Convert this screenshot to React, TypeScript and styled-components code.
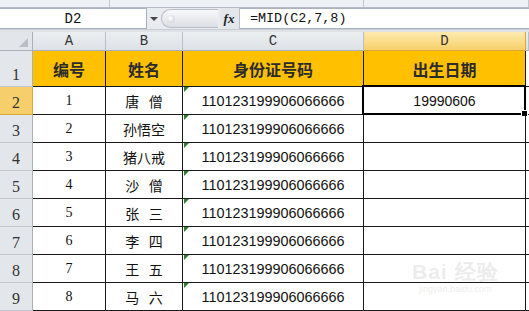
import React from "react";
import styled, { createGlobalStyle } from "styled-components";

const GlobalStyle = createGlobalStyle`
  html, body {
    margin: 0;
    padding: 0;
    background: #ffffff;
    overflow: hidden;
  }
`;

const Page = styled.div`
  width: 529px;
  height: 311px;
  display: flex;
  flex-direction: column;
  background: #dfe3e8;
  font-family: "Liberation Sans", Arial, sans-serif;
  position: relative;
  overflow: hidden;
`;

const RibbonEdge = styled.div`
  height: 7px;
  display: grid;
  grid-template-columns: 110px 254px 1fr;
  background: #eef1f5;
  border-bottom: 1px solid #b6bcc6;
  & > div {
    border-right: 1px solid #c3c8d0;
  }
`;

const FormulaBar = styled.div`
  height: 21px;
  display: flex;
  align-items: stretch;
  background: #e8ebef;
  border-bottom: 1px solid #c8ccd3;
  margin-bottom: 2px;
`;

const NameBox = styled.div`
  width: 146px;
  background: #fff;
  border: 1px solid #aab2bd;
  border-left: none;
  display: flex;
  align-items: center;
  justify-content: center;
  font-family: "Liberation Mono", "DejaVu Sans Mono", monospace;
  font-size: 14px;
  color: #111;
`;

const DropArrow = styled.div`
  width: 14px;
  display: flex;
  align-items: center;
  justify-content: center;
  &::before {
    content: "";
    border-left: 4px solid transparent;
    border-right: 4px solid transparent;
    border-top: 4px solid #444;
  }
`;

const Grip = styled.div`
  width: 56px;
  margin: 1px 2px 1px 0;
  position: relative;
  border-radius: 10px 0 0 10px;
  background: linear-gradient(#f7f8fa, #dcdfe4);
  border: 1px solid #b9bec6;
  border-right: none;
  &::after {
    content: "";
    position: absolute;
    left: 5px;
    top: 5px;
    width: 8px;
    height: 8px;
    border-radius: 50%;
    background: radial-gradient(circle at 40% 40%, #fff, #c4c8ce);
  }
`;

const FxButton = styled.div`
  width: 18px;
  display: flex;
  align-items: center;
  justify-content: center;
  font-family: "Liberation Serif", serif;
  font-style: italic;
  font-weight: bold;
  font-size: 13px;
  color: #222;
  background: #e3e6ea;
  border-right: 1px solid #b9bec6;
  padding-right: 1px;
`;

const FormulaInput = styled.div`
  flex: 1;
  background: #fff;
  border-top: 1px solid #aab2bd;
  border-bottom: 1px solid #aab2bd;
  display: flex;
  align-items: center;
  padding-left: 10px;
  font-family: "Liberation Mono", "DejaVu Sans Mono", monospace;
  font-size: 13.4px;
  color: #111;
`;

const Sheet = styled.div`
  display: grid;
  grid-template-columns: 33px 73px 77px 181px 162px 1fr;
  grid-template-rows: 19px 36px repeat(8, 28px);
  background: #fff;
`;

const Corner = styled.div`
  background: #e2e5ea;
  border-right: 1px solid #a9b0ba;
  border-bottom: 1px solid #a9b0ba;
  position: relative;
  &::after {
    content: "";
    position: absolute;
    right: 4px;
    bottom: 3px;
    border-left: 9px solid transparent;
    border-bottom: 9px solid #b9bdc4;
  }
`;

const ColHead = styled.div<{ $active?: boolean }>`
  display: flex;
  align-items: center;
  justify-content: center;
  font-family: "Liberation Mono", "DejaVu Sans Mono", monospace;
  font-size: 14px;
  color: #333;
  background: ${(p) =>
    p.$active
      ? "linear-gradient(#fdeab0, #f7cf6a)"
      : "linear-gradient(#eceff2, #dde1e6)"};
  border-right: 1px solid ${(p) => (p.$active ? "#d9a93c" : "#b8bfc9")};
  border-bottom: 1px solid ${(p) => (p.$active ? "#d9a93c" : "#a9b0ba")};
`;

const RowHead = styled.div<{ $active?: boolean }>`
  display: flex;
  align-items: flex-end;
  justify-content: center;
  padding-bottom: 2px;
  font-family: "Liberation Serif", serif;
  font-size: 16px;
  color: #333;
  background: ${(p) => (p.$active ? "#f6cf6c" : "#e3e6ea")};
  border-right: 1px solid ${(p) => (p.$active ? "#d9a93c" : "#a9b0ba")};
  border-bottom: 1px solid ${(p) => (p.$active ? "#d9a93c" : "#c2c7cf")};
`;

const HeadCell = styled.div`
  display: flex;
  align-items: center;
  justify-content: center;
  background: #ffc000;
  border-right: 1px solid #1a1a1a;
  border-bottom: 1px solid #1a1a1a;
  font-family: "Noto Sans CJK SC", sans-serif;
  font-weight: bold;
  font-size: 16px;
  color: #2b2b2b;
`;

const Cell = styled.div<{ $kind?: "id" | "num" | "name" | "date" }>`
  position: relative;
  display: flex;
  align-items: center;
  justify-content: center;
  border-right: 1px solid #1a1a1a;
  border-bottom: 1px solid #1a1a1a;
  color: #111;
  font-family: ${(p) =>
    p.$kind === "name"
      ? '"Noto Sans CJK SC", sans-serif'
      : p.$kind === "num"
      ? '"Liberation Serif", serif'
      : '"Liberation Sans", Arial, sans-serif'};
  font-size: ${(p) => (p.$kind === "id" ? "14.4px" : "14px")};
  white-space: pre;
  ${(p) =>
    p.$kind === "id" &&
    `
    &::before {
      content: "";
      position: absolute;
      left: 1px;
      top: 0;
      border-top: 5px solid #2f7d32;
      border-right: 5px solid transparent;
    }
  `}
`;

const Selected = styled.div`
  position: absolute;
  inset: -2px -1px -1px -2px;
  border: 2px solid #000;
  box-shadow: inset 0 0 0 1px #fff;
  pointer-events: none;
  &::after {
    content: "";
    position: absolute;
    right: -4px;
    bottom: -4px;
    width: 5px;
    height: 5px;
    background: #000;
    border: 1px solid #fff;
  }
`;

const Edge = styled.div`
  border-bottom: 1px solid #1a1a1a;
`;

const Watermark = styled.div`
  position: absolute;
  left: 412px;
  top: 258px;
  display: flex;
  flex-direction: column;
  align-items: center;
  color: rgba(200, 200, 200, 0.35);
  font-family: "Liberation Sans", Arial, sans-serif;
  pointer-events: none;
  b {
    font-size: 21px;
    letter-spacing: 1px;
  }
  span {
    font-size: 9px;
    margin-top: -2px;
  }
`;

const people = [
  ["1", "唐   僧"],
  ["2", "孙悟空"],
  ["3", "猪八戒"],
  ["4", "沙   僧"],
  ["5", "张   三"],
  ["6", "李   四"],
  ["7", "王   五"],
  ["8", "马   六"],
];

const App = () => {
  return (
    <Page>
      <GlobalStyle />
      <RibbonEdge>
        <div />
        <div />
        <div />
      </RibbonEdge>
      <FormulaBar>
        <NameBox>D2</NameBox>
        <DropArrow />
        <Grip />
        <FxButton>fx</FxButton>
        <FormulaInput>=MID(C2,7,8)</FormulaInput>
      </FormulaBar>
      <Sheet>
        <Corner />
        <ColHead>A</ColHead>
        <ColHead>B</ColHead>
        <ColHead>C</ColHead>
        <ColHead $active>D</ColHead>
        <ColHead />

        <RowHead>1</RowHead>
        <HeadCell>编号</HeadCell>
        <HeadCell>姓名</HeadCell>
        <HeadCell>身份证号码</HeadCell>
        <HeadCell>出生日期</HeadCell>
        <Edge />

        {people.map(([no, name], i) => (
          <React.Fragment key={no}>
            <RowHead $active={i === 0}>{i + 2}</RowHead>
            <Cell $kind="num">{no}</Cell>
            <Cell $kind="name">{name}</Cell>
            <Cell $kind="id">110123199906066666</Cell>
            <Cell $kind="date">
              {i === 0 && "19990606"}
              {i === 0 && <Selected />}
            </Cell>
            <Edge />
          </React.Fragment>
        ))}
      </Sheet>
      <Watermark>
        <b>Bai 经验</b>
        <span>jingyan.baidu.com</span>
      </Watermark>
    </Page>
  );
};

export default App;
